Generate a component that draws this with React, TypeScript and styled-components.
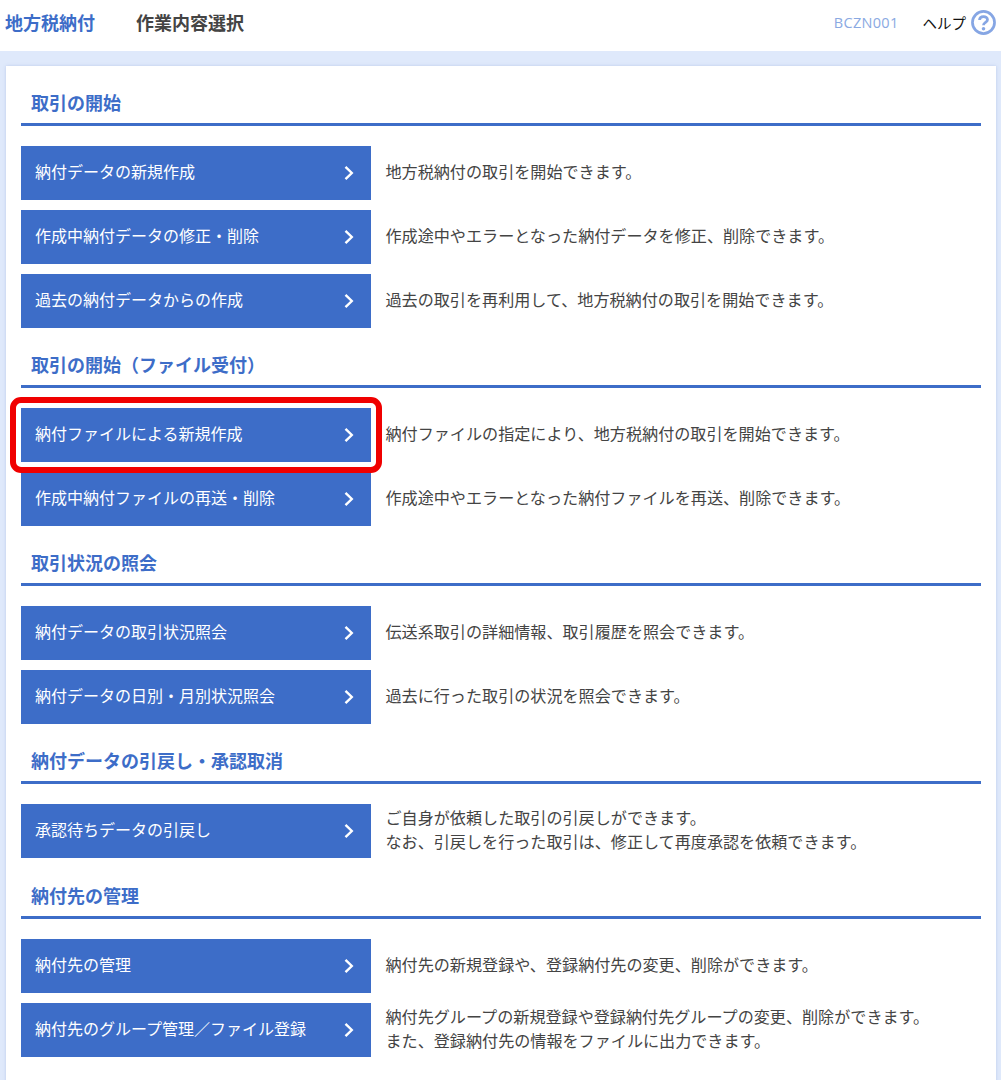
import React from "react";
import styled, { createGlobalStyle } from "styled-components";

const Global = createGlobalStyle`
  html, body { margin: 0; padding: 0; background: #dfe9fb; }
  body { font-family: "Noto Sans CJK JP", "Noto Sans", sans-serif; color: #333; overflow: hidden; height: 1080px; }
  * { box-sizing: border-box; }
`;

const Page = styled.div`
  width: 1001px;
  height: 1080px;
  overflow: hidden;
`;

const Header = styled.header`
  height: 51px;
  background: #fff;
  display: flex;
  align-items: center;
  padding: 0 5px 7px;
`;

const Category = styled.h1`
  margin: 0 41px 0 0;
  font-size: 18px;
  font-weight: 700;
  color: #3d6dc8;
  line-height: 1;
`;

const PageTitle = styled.h2`
  margin: 0;
  font-size: 18px;
  font-weight: 700;
  color: #444;
  line-height: 1;
  flex: 1;
`;

const ScreenId = styled.span`
  font-family: "Open Sans", "Noto Sans", sans-serif;
  font-size: 14.5px;
  color: #8aa9e2;
  letter-spacing: 0.3px;
  margin-right: 24px;
`;

const Help = styled.span`
  display: flex;
  align-items: center;
  font-size: 14.5px;
  color: #111;
  gap: 5px;
`;

const Card = styled.main`
  position: relative;
  margin: 15px 5px 0 6px;
  background: #fff;
  padding: 0 15px;
  box-shadow: 0 0 3px rgba(120, 150, 210, 0.35);
  min-height: 1100px;
`;

const Heading = styled.h3<{ $tall?: boolean }>`
  margin: 0;
  height: ${(p) => (p.$tall ? 61 : 60)}px;
  padding: 0 10px 8px;
  display: flex;
  align-items: flex-end;
  font-size: 18px;
  font-weight: 700;
  line-height: 26px;
  color: #3d6dc8;
  border-bottom: 3px solid #3d6dc8;
`;

const Rows = styled.div`
  display: flex;
  flex-direction: column;
  gap: 10px;
  padding-top: 20px;
`;

const Row = styled.div`
  display: flex;
  align-items: center;
  height: 54px;
`;

const ActionButton = styled.button`
  flex: none;
  width: 350px;
  height: 54px;
  border: 0;
  margin: 0;
  padding: 0 17px 0 14px;
  background: #3d6dc8;
  color: #fff;
  font: inherit;
  font-size: 16px;
  display: flex;
  align-items: center;
  justify-content: space-between;
  text-align: left;
`;

const Label = styled.span`
  margin-bottom: 4px;
`;

const Description = styled.p`
  margin: 0 0 4px 14.5px;
  font-size: 16.1px;
  line-height: 24px;
  color: #444;
  white-space: pre-line;
`;

const Highlight = styled.div`
  position: absolute;
  left: 4px;
  top: 331px;
  width: 372px;
  height: 76px;
  border: 6px solid #f00000;
  border-radius: 11px;
  pointer-events: none;
`;

const Chevron = () => (
  <svg width="10" height="16" viewBox="0 0 10 16" fill="none" aria-hidden="true">
    <path d="M1.5 1.8 L7.8 8 L1.5 14.2" stroke="#fff" strokeWidth="2.4" />
  </svg>
);

const HelpIcon = () => (
  <svg width="25" height="25" viewBox="0 0 24 24" aria-hidden="true">
    <circle cx="12" cy="12" r="10.6" fill="#fff" stroke="#86a6e4" strokeWidth="2.6" />
    <path d="M8.2 9.6 C8.4 5.4 15.8 5.4 15.8 9.4 C15.8 12 12 11.8 12 14.6" fill="none" stroke="#86a6e4" strokeWidth="2.7" />
    <circle cx="12" cy="18" r="1.7" fill="#86a6e4" />
  </svg>
);

const sections = [
  {
    title: "取引の開始",
    rows: [
      ["納付データの新規作成", "地方税納付の取引を開始できます。"],
      ["作成中納付データの修正・削除", "作成途中やエラーとなった納付データを修正、削除できます。"],
      ["過去の納付データからの作成", "過去の取引を再利用して、地方税納付の取引を開始できます。"],
    ],
  },
  {
    title: "取引の開始（ファイル受付）",
    rows: [
      ["納付ファイルによる新規作成", "納付ファイルの指定により、地方税納付の取引を開始できます。"],
      ["作成中納付ファイルの再送・削除", "作成途中やエラーとなった納付ファイルを再送、削除できます。"],
    ],
  },
  {
    title: "取引状況の照会",
    rows: [
      ["納付データの取引状況照会", "伝送系取引の詳細情報、取引履歴を照会できます。"],
      ["納付データの日別・月別状況照会", "過去に行った取引の状況を照会できます。"],
    ],
  },
  {
    title: "納付データの引戻し・承認取消",
    rows: [
      ["承認待ちデータの引戻し", "ご自身が依頼した取引の引戻しができます。\nなお、引戻しを行った取引は、修正して再度承認を依頼できます。"],
    ],
  },
  {
    title: "納付先の管理",
    tall: true,
    rows: [
      ["納付先の管理", "納付先の新規登録や、登録納付先の変更、削除ができます。"],
      ["納付先のグループ管理／ファイル登録", "納付先グループの新規登録や登録納付先グループの変更、削除ができます。\nまた、登録納付先の情報をファイルに出力できます。"],
    ],
  },
];

export default function App() {
  return (
    <Page>
      <Global />
      <Header>
        <Category>地方税納付</Category>
        <PageTitle>作業内容選択</PageTitle>
        <ScreenId>BCZN001</ScreenId>
        <Help>
          ヘルプ
          <HelpIcon />
        </Help>
      </Header>
      <Card>
        {sections.map((s) => (
          <section key={s.title}>
            <Heading $tall={s.tall}>{s.title}</Heading>
            <Rows>
              {s.rows.map(([label, text]) => (
                <Row key={label}>
                  <ActionButton>
                    <Label>{label}</Label>
                    <Chevron />
                  </ActionButton>
                  <Description>{text}</Description>
                </Row>
              ))}
            </Rows>
          </section>
        ))}
        <Highlight />
      </Card>
    </Page>
  );
}
